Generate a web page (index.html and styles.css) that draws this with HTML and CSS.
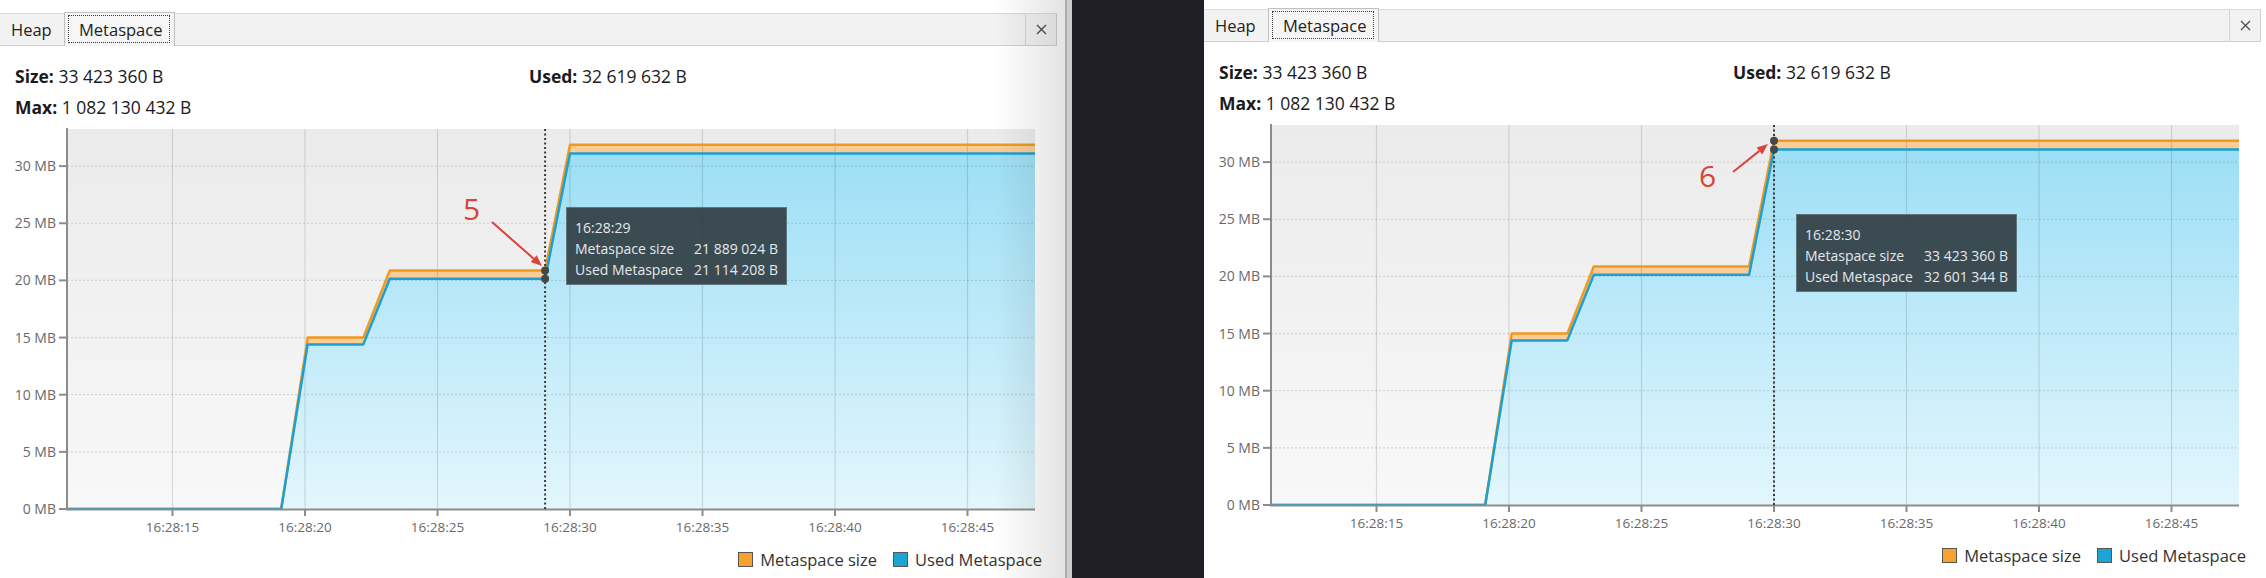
FILE: index.html
```html
<!DOCTYPE html>
<html lang="en">
<head>
<meta charset="utf-8">
<title>Metaspace monitor</title>
<link rel="stylesheet" href="styles.css">
</head>
<body>
<section class="panel panel-left">
  <div class="tabbar">
    <div class="tab">Heap</div>
    <div class="tab tab-sel"><span class="focus">Metaspace</span></div>
    <div class="tabfill"></div>
    <div class="tabclose"><svg width="11" height="11" viewBox="0 0 11 11"><path d="M1 1L10 10M10 1L1 10" stroke="#505050" stroke-width="1.4"/></svg></div>
  </div>
  <div class="info">
    <div><b>Size:</b> 33 423 360 B</div>
    <div><b>Used:</b> 32 619 632 B</div>
    <div><b>Max:</b> 1 082 130 432 B</div>
  </div>
  <svg class="chart" width="1065" height="421" viewBox="0 123 1065 421">
    <defs>
      <linearGradient id="bgL" x1="0" y1="129" x2="0" y2="509" gradientUnits="userSpaceOnUse"><stop offset="0" stop-color="#ebebeb"/><stop offset="1" stop-color="#f8f8f8"/></linearGradient>
      <linearGradient id="blL" x1="0" y1="145" x2="0" y2="509" gradientUnits="userSpaceOnUse"><stop offset="0" stop-color="#9bdef5"/><stop offset="1" stop-color="#e3f6fd"/></linearGradient>
      <clipPath id="cpL"><rect x="67" y="129" width="968" height="381"/></clipPath>
    </defs>
    <rect x="67" y="129" width="968" height="380" fill="url(#bgL)"/>
    <g clip-path="url(#cpL)">
      <polygon fill="url(#blL)" points="67,509 281.2,509 307.7,344.4 363.3,344.4 389.8,278.8 545.1,278.8 570,153.4 1035,153.4 1035,509"/>
      <polygon fill="#f9cd95" points="67,509 281.2,509 307.7,337.6 363.3,337.6 389.8,270.4 545.1,270.4 570,144.7 1035,144.7 1035,153.4 570,153.4 545.1,278.8 389.8,278.8 363.3,344.4 307.7,344.4 281.2,509"/>
      <g class="gv">
        <line x1="172.5" y1="129" x2="172.5" y2="509"/><line x1="305" y1="129" x2="305" y2="509"/><line x1="437.5" y1="129" x2="437.5" y2="509"/><line x1="570" y1="129" x2="570" y2="509"/><line x1="702.5" y1="129" x2="702.5" y2="509"/><line x1="835" y1="129" x2="835" y2="509"/><line x1="967.5" y1="129" x2="967.5" y2="509"/>
      </g>
      <g class="gh">
        <line x1="67" y1="451.85" x2="1035" y2="451.85"/><line x1="67" y1="394.7" x2="1035" y2="394.7"/><line x1="67" y1="337.55" x2="1035" y2="337.55"/><line x1="67" y1="280.4" x2="1035" y2="280.4"/><line x1="67" y1="223.25" x2="1035" y2="223.25"/><line x1="67" y1="166.1" x2="1035" y2="166.1"/>
      </g>
      <polyline class="ln-o" points="67,509 281.2,509 307.7,337.6 363.3,337.6 389.8,270.4 545.1,270.4 570,144.7 1035,144.7"/>
      <polyline class="ln-b" points="67,509 281.2,509 307.7,344.4 363.3,344.4 389.8,278.8 545.1,278.8 570,153.4 1035,153.4"/>
    </g>
    <g class="axis">
      <line x1="67" y1="128" x2="67" y2="510"/><line x1="66" y1="509.5" x2="1035" y2="509.5"/>
      <line x1="59" y1="509" x2="66" y2="509"/><line x1="59" y1="451.85" x2="66" y2="451.85"/><line x1="59" y1="394.7" x2="66" y2="394.7"/><line x1="59" y1="337.55" x2="66" y2="337.55"/><line x1="59" y1="280.4" x2="66" y2="280.4"/><line x1="59" y1="223.25" x2="66" y2="223.25"/><line x1="59" y1="166.1" x2="66" y2="166.1"/>
      <line x1="172.5" y1="510" x2="172.5" y2="516"/><line x1="305" y1="510" x2="305" y2="516"/><line x1="437.5" y1="510" x2="437.5" y2="516"/><line x1="570" y1="510" x2="570" y2="516"/><line x1="702.5" y1="510" x2="702.5" y2="516"/><line x1="835" y1="510" x2="835" y2="516"/><line x1="967.5" y1="510" x2="967.5" y2="516"/>
    </g>
    <g class="ylab">
      <text x="56" y="514">0 MB</text><text x="56" y="456.8">5 MB</text><text x="56" y="399.7">10 MB</text><text x="56" y="342.5">15 MB</text><text x="56" y="285.4">20 MB</text><text x="56" y="228.2">25 MB</text><text x="56" y="171.1">30 MB</text>
    </g>
    <g class="xlab">
      <text x="172.5" y="532">16:28:15</text><text x="305" y="532">16:28:20</text><text x="437.5" y="532">16:28:25</text><text x="570" y="532">16:28:30</text><text x="702.5" y="532">16:28:35</text><text x="835" y="532">16:28:40</text><text x="967.5" y="532">16:28:45</text>
    </g>
    <line class="cursor" x1="545.1" y1="129" x2="545.1" y2="509"/>
    <circle class="dot" cx="545.1" cy="270.4" r="4"/>
    <circle class="dot" cx="545.1" cy="278.8" r="4"/>
    <text class="note" x="463" y="220">5</text>
    <line class="arrow" x1="492" y1="222" x2="533.7" y2="258.7"/>
    <polygon class="arrowhead" points="542,266 530.7,262.1 536.7,255.3"/>
  </svg>
  <div class="legend">
    <div class="legend-item"><span class="sw sw-o"></span>Metaspace size</div>
    <div class="legend-item"><span class="sw sw-b"></span>Used Metaspace</div>
  </div>
  <div class="tip tip-l">
    <div class="t">16:28:29</div>
    <div>Metaspace size</div><div class="v">21 889 024 B</div>
    <div>Used Metaspace</div><div class="v">21 114 208 B</div>
  </div>
  <div class="fade"></div>
</section>
<div class="edge"></div>
<div class="gap"></div>
<section class="panel panel-right">
  <div class="tabbar">
    <div class="tab">Heap</div>
    <div class="tab tab-sel"><span class="focus">Metaspace</span></div>
    <div class="tabfill"></div>
    <div class="tabclose"><svg width="11" height="11" viewBox="0 0 11 11"><path d="M1 1L10 10M10 1L1 10" stroke="#505050" stroke-width="1.4"/></svg></div>
  </div>
  <div class="info">
    <div><b>Size:</b> 33 423 360 B</div>
    <div><b>Used:</b> 32 619 632 B</div>
    <div><b>Max:</b> 1 082 130 432 B</div>
  </div>
  <svg class="chart" width="1065" height="421" viewBox="0 123 1065 421">
    <defs>
      <linearGradient id="bgR" x1="0" y1="129" x2="0" y2="509" gradientUnits="userSpaceOnUse"><stop offset="0" stop-color="#ebebeb"/><stop offset="1" stop-color="#f8f8f8"/></linearGradient>
      <linearGradient id="blR" x1="0" y1="145" x2="0" y2="509" gradientUnits="userSpaceOnUse"><stop offset="0" stop-color="#9bdef5"/><stop offset="1" stop-color="#e3f6fd"/></linearGradient>
      <clipPath id="cpR"><rect x="67" y="129" width="968" height="381"/></clipPath>
    </defs>
    <rect x="67" y="129" width="968" height="380" fill="url(#bgR)"/>
    <g clip-path="url(#cpR)">
      <polygon fill="url(#blR)" points="67,509 281.2,509 307.7,344.4 363.3,344.4 389.8,278.8 545.1,278.8 570,153.4 1035,153.4 1035,509"/>
      <polygon fill="#f9cd95" points="67,509 281.2,509 307.7,337.6 363.3,337.6 389.8,270.4 545.1,270.4 570,144.7 1035,144.7 1035,153.4 570,153.4 545.1,278.8 389.8,278.8 363.3,344.4 307.7,344.4 281.2,509"/>
      <g class="gv">
        <line x1="172.5" y1="129" x2="172.5" y2="509"/><line x1="305" y1="129" x2="305" y2="509"/><line x1="437.5" y1="129" x2="437.5" y2="509"/><line x1="570" y1="129" x2="570" y2="509"/><line x1="702.5" y1="129" x2="702.5" y2="509"/><line x1="835" y1="129" x2="835" y2="509"/><line x1="967.5" y1="129" x2="967.5" y2="509"/>
      </g>
      <g class="gh">
        <line x1="67" y1="451.85" x2="1035" y2="451.85"/><line x1="67" y1="394.7" x2="1035" y2="394.7"/><line x1="67" y1="337.55" x2="1035" y2="337.55"/><line x1="67" y1="280.4" x2="1035" y2="280.4"/><line x1="67" y1="223.25" x2="1035" y2="223.25"/><line x1="67" y1="166.1" x2="1035" y2="166.1"/>
      </g>
      <polyline class="ln-o" points="67,509 281.2,509 307.7,337.6 363.3,337.6 389.8,270.4 545.1,270.4 570,144.7 1035,144.7"/>
      <polyline class="ln-b" points="67,509 281.2,509 307.7,344.4 363.3,344.4 389.8,278.8 545.1,278.8 570,153.4 1035,153.4"/>
    </g>
    <g class="axis">
      <line x1="67" y1="128" x2="67" y2="510"/><line x1="66" y1="509.5" x2="1035" y2="509.5"/>
      <line x1="59" y1="509" x2="66" y2="509"/><line x1="59" y1="451.85" x2="66" y2="451.85"/><line x1="59" y1="394.7" x2="66" y2="394.7"/><line x1="59" y1="337.55" x2="66" y2="337.55"/><line x1="59" y1="280.4" x2="66" y2="280.4"/><line x1="59" y1="223.25" x2="66" y2="223.25"/><line x1="59" y1="166.1" x2="66" y2="166.1"/>
      <line x1="172.5" y1="510" x2="172.5" y2="516"/><line x1="305" y1="510" x2="305" y2="516"/><line x1="437.5" y1="510" x2="437.5" y2="516"/><line x1="570" y1="510" x2="570" y2="516"/><line x1="702.5" y1="510" x2="702.5" y2="516"/><line x1="835" y1="510" x2="835" y2="516"/><line x1="967.5" y1="510" x2="967.5" y2="516"/>
    </g>
    <g class="ylab">
      <text x="56" y="514">0 MB</text><text x="56" y="456.8">5 MB</text><text x="56" y="399.7">10 MB</text><text x="56" y="342.5">15 MB</text><text x="56" y="285.4">20 MB</text><text x="56" y="228.2">25 MB</text><text x="56" y="171.1">30 MB</text>
    </g>
    <g class="xlab">
      <text x="172.5" y="532">16:28:15</text><text x="305" y="532">16:28:20</text><text x="437.5" y="532">16:28:25</text><text x="570" y="532">16:28:30</text><text x="702.5" y="532">16:28:35</text><text x="835" y="532">16:28:40</text><text x="967.5" y="532">16:28:45</text>
    </g>
    <line class="cursor" x1="570" y1="129" x2="570" y2="509"/>
    <circle class="dot" cx="570" cy="144.7" r="4"/>
    <circle class="dot" cx="570" cy="153.4" r="4"/>
    <text class="note" x="495" y="191">6</text>
    <line class="arrow" x1="529" y1="176" x2="555.4" y2="154.9"/>
    <polygon class="arrowhead" points="564,148 558.2,158.4 552.6,151.4"/>
  </svg>
  <div class="legend">
    <div class="legend-item"><span class="sw sw-o"></span>Metaspace size</div>
    <div class="legend-item"><span class="sw sw-b"></span>Used Metaspace</div>
  </div>
  <div class="tip tip-r">
    <div class="t">16:28:30</div>
    <div>Metaspace size</div><div class="v">33 423 360 B</div>
    <div>Used Metaspace</div><div class="v">32 601 344 B</div>
  </div>
</section>
</body>
</html>
```
FILE: styles.css
```css
html, body {
  margin: 0;
  padding: 0;
}
body {
  width: 2266px;
  height: 578px;
  overflow: hidden;
  display: flex;
  background: #201f27;
  font-family: "Open Sans", "Noto Sans", sans-serif;
}
.panel {
  position: relative;
  flex: none;
  width: 1065px;
  height: 578px;
  background: #ffffff;
  overflow: hidden;
}
.edge {
  flex: none;
  width: 7px;
  box-sizing: border-box;
  background: #cdcdcd;
  border-left: 2px solid #adadad;
}
.gap {
  flex: none;
  width: 132px;
}

/* tabs */
.tabbar {
  margin-top: 13px;
  width: 1057px;
  height: 33px;
  box-sizing: border-box;
  display: flex;
  background: #f2f2f2;
  border-top: 1px solid #dcdcdc;
  border-bottom: 1px solid #cfcfcf;
  font-size: 16.5px;
  color: #222;
}
.panel-right .tabbar {
  margin-top: 9px;
}
.tab {
  flex: none;
  width: 64px;
  box-sizing: border-box;
  padding-left: 11px;
  display: flex;
  align-items: center;
}
.tab-sel {
  width: 111px;
  height: 34px;
  margin-top: -2px;
  padding: 2px 4px 3px 3px;
  border: 1px solid #c0c0c0;
  border-bottom: none;
  background: #f6f6f6;
}
.focus {
  flex: 1;
  align-self: stretch;
  display: flex;
  align-items: center;
  padding-left: 10px;
  border: 1px dotted #3a3a3a;
}
.tabfill {
  flex: 1;
}
.tabclose {
  flex: none;
  width: 30px;
  display: flex;
  align-items: center;
  justify-content: center;
  border-left: 1px solid #d4d4d4;
  border-right: 1px solid #cfcfcf;
}

/* info */
.info {
  display: grid;
  grid-template-columns: 514px auto;
  height: 77px;
  box-sizing: border-box;
  padding: 15px 0 0 15px;
  line-height: 31px;
  font-size: 17.5px;
  color: #1b1b1b;
}
.info b {
  font-weight: 700;
}

/* chart */
.chart {
  display: block;
}
.gv line {
  stroke: rgba(0, 0, 0, 0.12);
  stroke-width: 1.2;
}
.gh line {
  stroke: rgba(0, 0, 0, 0.13);
  stroke-width: 1.2;
  stroke-dasharray: 2 2;
}
.ln-o {
  fill: none;
  stroke: #f0991f;
  stroke-width: 2.5;
  stroke-linejoin: round;
}
.ln-b {
  fill: none;
  stroke: #1d9fd1;
  stroke-width: 2.5;
  stroke-linejoin: round;
}
.axis line {
  stroke: #8c8c8c;
  stroke-width: 2;
}
.ylab text {
  font-size: 14px;
  fill: #6a6a6a;
  text-anchor: end;
}
.xlab text {
  font-size: 13.5px;
  fill: #6a6a6a;
  text-anchor: middle;
}
.cursor {
  stroke: #3a3a3a;
  stroke-width: 2;
  stroke-dasharray: 2 2.5;
}
.dot {
  fill: #474747;
}
.note {
  font-size: 30px;
  fill: #d8453b;
}
.arrow {
  stroke: #d8453b;
  stroke-width: 2;
}
.arrowhead {
  fill: #d8453b;
}

/* legend */
.legend {
  display: flex;
  justify-content: flex-end;
  align-items: center;
  gap: 16px;
  height: 22px;
  margin-top: 4px;
  padding-right: 23px;
  font-size: 16.5px;
  color: #333;
}
.legend-item {
  display: flex;
  align-items: center;
  gap: 7px;
}
.sw {
  width: 13px;
  height: 13px;
  border: 1px solid #555;
}
.sw-o {
  background: #f5a230;
}
.sw-b {
  background: #1ea3d6;
}

/* tooltip */
.tip {
  position: absolute;
  width: 221px;
  height: 78px;
  box-sizing: border-box;
  padding: 9px 8px 0 8px;
  display: grid;
  grid-template-columns: auto auto;
  align-content: start;
  background: rgba(47, 58, 63, 0.9);
  border: 1px solid rgba(130, 150, 158, 0.55);
  color: #e4e8ea;
  font-size: 14px;
  line-height: 21px;
}
.tip .t {
  grid-column: 1 / -1;
}
.tip .v {
  text-align: right;
}
.tip-l {
  left: 566px;
  top: 207px;
}
.tip-r {
  left: 592px;
  top: 214px;
}

/* right-edge shading of the left window */
.fade {
  position: absolute;
  top: 0;
  right: 0;
  width: 70px;
  height: 100%;
  background: linear-gradient(to right, rgba(0, 0, 0, 0), rgba(0, 0, 0, 0.11));
  pointer-events: none;
}
```
